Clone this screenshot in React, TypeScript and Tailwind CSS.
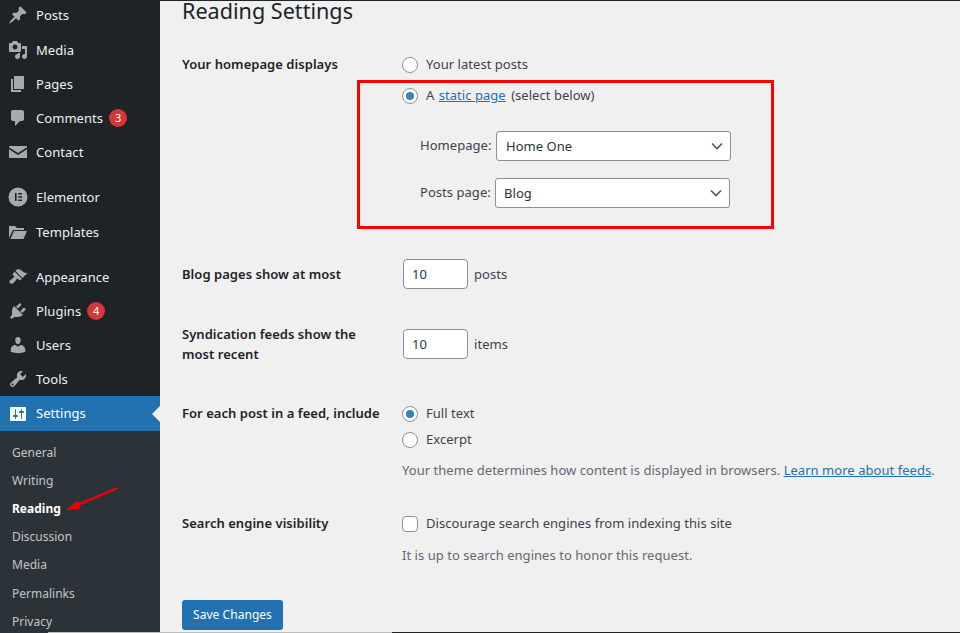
import React from "react";

const F = "font-['Noto_Sans','Open_Sans',sans-serif]";

const Pin = () => (<svg width="20" height="20" viewBox="0 0 20 20" fill="currentColor"><path d="M10.44 3.02l1.82-1.82 6.36 6.35-1.83 1.82c-1.05-.68-2.48-.57-3.41.36l-.75.75c-.92.93-1.04 2.35-.35 3.41l-1.83 1.82-2.41-2.41-2.8 2.79c-.42.42-3.38 2.71-3.8 2.29s1.86-3.39 2.28-3.81l2.79-2.79L4.1 9.36l1.83-1.82c1.05.69 2.48.57 3.4-.36l.75-.75c.93-.92 1.05-2.35.36-3.41z"/></svg>);
const MediaI = () => (<svg width="20" height="20" viewBox="0 0 20 20" fill="currentColor"><path d="M13 11V4c0-.55-.45-1-1-1h-1.67L9 1H5L3.67 3H2c-.55 0-1 .45-1 1v7c0 .55.45 1 1 1h10c.55 0 1-.45 1-1zM7 4.5c1.38 0 2.5 1.12 2.5 2.5S8.38 9.5 7 9.5 4.5 8.38 4.5 7 5.62 4.5 7 4.5zM14 6h5v10.5c0 1.38-1.12 2.5-2.5 2.5S14 17.88 14 16.5s1.12-2.5 2.5-2.5c.17 0 .34.02.5.05V9h-3V6zm-4 8.05V13h2v3.5c0 1.38-1.12 2.5-2.5 2.5S7 17.88 7 16.5 8.12 14 9.5 14c.17 0 .34.02.5.05z"/></svg>);
const PagesI = () => (<svg width="20" height="20" viewBox="0 0 20 20" fill="currentColor"><path d="M6 15V2h10v13H6zm-1 1h8v2H3V5h2v11z"/></svg>);
const CommentI = () => (<svg width="20" height="20" viewBox="0 0 20 20" fill="currentColor"><path d="M5 2h9c1.1 0 2 .9 2 2v7c0 1.1-.9 2-2 2h-2l-5 5v-5H5c-1.1 0-2-.9-2-2V4c0-1.1.9-2 2-2z"/></svg>);
const MailI = () => (<svg width="20" height="20" viewBox="0 0 20 20" fill="currentColor"><path d="M1 4h18v1.2L10 11 1 5.2V4zm0 3.2l9 5.8 9-5.8V16H1V7.2z"/></svg>);
const ElementorI = () => (<svg width="20" height="20" viewBox="0 0 20 20"><path fill="currentColor" fillRule="evenodd" d="M10 .5a9.5 9.5 0 1 0 0 19 9.5 9.5 0 0 0 0-19zM7 6h1.6v8H7V6zm3.2 0H14v1.6h-3.8V6zm0 3.2H14v1.6h-3.8V9.2zm0 3.2H14V14h-3.8v-1.6z"/></svg>);
const FolderI = () => (<svg width="20" height="20" viewBox="0 0 20 20" fill="currentColor"><path d="M1 16V4h6l2 2h7v2H5L1 16zm1.5 1L6 9h13l-3.5 8h-13z" /></svg>);
const BrushI = () => (<svg width="20" height="20" viewBox="0 0 20 20" fill="currentColor"><path d="M14.48 11.06L7.41 3.99l1.5-1.5c.5-.56 2.3-.47 3.51.32 1.21.8 1.43 1.28 2.91 2.1 1.18.64 2.45 1.26 4.45.85zm-.71.71L6.7 4.7 4.93 6.47c-.39.39-.39 1.02 0 1.41l1.06 1.06c.39.39.39 1.03 0 1.42-.6.6-1.43 1.11-2.21 1.69-.35.26-.7.53-1.01.84C1.43 13.23.5 14.52 2 16c1.49 1.49 2.92.57 4.26-.76.3-.31.58-.66.84-1.01.58-.78 1.09-1.61 1.69-2.21.39-.39 1.02-.39 1.41 0l1.06 1.06c.39.39 1.02.39 1.41 0z"/></svg>);
const PlugI = () => (<svg width="20" height="20" viewBox="0 0 20 20" fill="currentColor"><path d="M13.11 4.36L9.87 7.6 8 5.73l3.24-3.24c.35-.34 1.05-.2 1.56.32.52.51.66 1.21.31 1.55zm-8 1.77l.91-1.12 9.01 9.01-1.19.84c-.71.71-2.63 1.16-3.82 1.16H6.14L4.9 17.26c-.59.59-1.54.59-2.12 0-.59-.58-.59-1.53 0-2.12l1.24-1.24v-3.88c0-1.13.4-3.19 1.09-3.89zm7.26 3.97l3.24-3.24c.34-.35 1.04-.21 1.55.31.52.51.66 1.21.31 1.55l-3.24 3.25z"/></svg>);
const UserI = () => (<svg width="20" height="20" viewBox="0 0 20 20" fill="currentColor"><path d="M10 9.25c-2.27 0-2.73-3.44-2.73-3.44C7 4.02 7.82 2 9.97 2c2.16 0 2.98 2.02 2.71 3.81 0 0-.41 3.44-2.68 3.44zm0 2.57L12.72 10c2.39 0 4.52 2.33 4.52 4.53v2.49s-3.65 1.13-7.24 1.13c-3.65 0-7.24-1.13-7.24-1.13v-2.49c0-2.25 1.94-4.48 4.47-4.48z"/></svg>);
const WrenchI = () => (<svg width="20" height="20" viewBox="0 0 20 20" fill="currentColor"><path d="M16.68 9.77c-1.34 1.34-3.3 1.67-4.95.99l-5.41 6.52c-.99.99-2.59.99-3.58 0s-.99-2.59 0-3.57l6.52-5.42c-.68-1.65-.35-3.61.99-4.95 1.28-1.28 3.12-1.62 4.72-1.06l-2.89 2.89 2.82 2.82 2.86-2.87c.53 1.58.18 3.39-1.08 4.65zM3.81 16.21c.4.39 1.04.39 1.43 0 .4-.4.4-1.04 0-1.43-.39-.4-1.03-.4-1.43 0-.39.39-.39 1.03 0 1.43z"/></svg>);
const SlidersI = () => (<svg width="20" height="20" viewBox="0 0 20 20" fill="currentColor"><path fillRule="evenodd" d="M18 16V4c0-.55-.45-1-1-1H3c-.55 0-1 .45-1 1v12c0 .55.45 1 1 1h14c.55 0 1-.45 1-1zM8 11h1c.55 0 1 .45 1 1s-.45 1-1 1H8v1.5c0 .28-.22.5-.5.5s-.5-.22-.5-.5V13H6c-.55 0-1-.45-1-1s.45-1 1-1h1V5.5c0-.28.22-.5.5-.5s.5.22.5.5V11zm5-2h-1c-.55 0-1-.45-1-1s.45-1 1-1h1V5.5c0-.28.22-.5.5-.5s.5.22.5.5V7h1c.55 0 1 .45 1 1s-.45 1-1 1h-1v5.5c0 .28-.22.5-.5.5s-.5-.22-.5-.5V9z"/></svg>);

function MenuItem({ icon, label, badge, className = "h-[34px]" }: { icon: React.ReactNode; label: string; badge?: string; className?: string }) {
  return (
    <div className={`flex items-center shrink-0 ${className} text-[#f0f0f1]`}>
      <span className="w-9 pl-2 flex items-center text-[#a7aaad] shrink-0">{icon}</span>
      <span className="text-[13px] tracking-[0.05px] pt-[2px]">{label}</span>
      {badge && <span className="ml-[6px] w-[18px] h-[18px] rounded-full bg-[#d63638] text-white text-[11px] flex items-center justify-center">{badge}</span>}
    </div>
  );
}

const Radio = ({ on }: { on?: boolean }) => (
  <span className="w-4 h-4 rounded-full border border-[#8c8f94] bg-white flex items-center justify-center shrink-0">
    {on && <span className="w-2 h-2 rounded-full bg-[#3582c4]" />}
  </span>
);

const Chevron = () => (
  <svg width="12" height="8" viewBox="0 0 12 8" fill="none" stroke="#50575e" strokeWidth="1.6"><path d="M1 1.5l5 5 5-5" /></svg>
);

const Select = ({ value, pad }: { value: string; pad: string }) => (
  <div className={`w-[235px] h-[30px] bg-white border border-[#8c8f94] rounded-[3px] flex items-center justify-between ${pad} pr-[7px] text-[#2c3338]`}>
    <span className="pt-[2px]">{value}</span>
    <Chevron />
  </div>
);

const NumberBox = () => (
  <div className="w-[65px] h-[30px] bg-white border border-[#8c8f94] rounded-[4px] flex items-center pl-2 pt-[2px] text-[#2c3338]">10</div>
);

export default function App() {
  return (
    <div className={`relative w-[960px] h-[633px] overflow-hidden flex bg-[#f0f0f1] ${F}`}>
      <aside className="w-[160px] shrink-0 bg-[#1d2327] flex flex-col">
        <MenuItem icon={<Pin />} label="Posts" className="h-[34px] -mt-[2px] mb-px" />
        <MenuItem icon={<MediaI />} label="Media" />
        <MenuItem icon={<PagesI />} label="Pages" />
        <MenuItem icon={<CommentI />} label="Comments" badge="3" />
        <MenuItem icon={<MailI />} label="Contact" />
        <div className="h-[11px] shrink-0" />
        <MenuItem icon={<ElementorI />} label="Elementor" />
        <MenuItem icon={<FolderI />} label="Templates" className="h-[36px]" />
        <div className="h-[10px] shrink-0" />
        <MenuItem icon={<BrushI />} label="Appearance" />
        <MenuItem icon={<PlugI />} label="Plugins" badge="4" />
        <MenuItem icon={<UserI />} label="Users" />
        <MenuItem icon={<WrenchI />} label="Tools" />
        <div className="relative flex items-center h-[35px] shrink-0 bg-[#2271b1] text-white">
          <span className="w-9 pl-2 flex items-center shrink-0"><SlidersI /></span>
          <span className="text-[13px] tracking-[0.05px]">Settings</span>
          <span className="absolute right-0 top-[10px] border-y-[8px] border-y-transparent border-r-[8px] border-r-[#f0f0f1]" />
        </div>
        <div className="flex-1 bg-[#2c3338] pt-[8px] text-[12px] text-[#c3c4c7]">
          {["General", "Writing", "Reading", "Discussion", "Media", "Permalinks", "Privacy"].map((t) => (
            <div key={t} className={`h-[28px] ${t === "Media" ? "mb-px" : ""} flex items-center pl-3 ${t === "Reading" ? "font-bold text-white" : ""}`}>{t}</div>
          ))}
        </div>
      </aside>

      <main className="flex-1 pl-[22px] text-[13px] tracking-[0.04px] text-[#3c434a] border-t border-[#1d2327]">
        <h1 className="h-[21px] text-[21.6px] tracking-normal leading-[19px] text-[#1d2327]">Reading Settings</h1>

        <section className="flex mt-[33px]">
          <div className="w-[220px] -mt-px font-semibold text-[#1d2327] leading-[20px]">Your homepage displays</div>
          <div>
            <label className="flex items-center gap-2 h-5"><Radio /><span>Your latest posts</span></label>
            <label className="flex items-center gap-2 h-5 mt-[11px]"><Radio on /><span>A <a className="ml-px text-[#2271b1] underline">static page</a> <span className="ml-[2px]">(select below)</span></span></label>
            <div className="flex items-center mt-[25px] ml-[18px]"><span className="w-[76px] whitespace-nowrap">Homepage:</span><Select value="Home One" pad="pl-[9px]" /></div>
            <div className="flex items-center mt-[17px] ml-[18px]"><span className="w-[75px] whitespace-nowrap">Posts page:</span><Select value="Blog" pad="pl-2" /></div>
          </div>
        </section>

        <section className="flex mt-[51px] items-center">
          <div className="w-[221px] pt-[2px] font-semibold text-[#1d2327]">Blog pages show at most</div>
          <div className="flex items-center gap-[6px]"><NumberBox /><span className="pt-[2px]">posts</span></div>
        </section>

        <section className="flex mt-[35px] items-center">
          <div className="w-[221px] font-semibold text-[#1d2327] leading-[20px]">Syndication feeds show the<br />most recent</div>
          <div className="flex items-center gap-[6px]"><NumberBox /><span className="pt-[2px]">items</span></div>
        </section>

        <section className="flex mt-[40px]">
          <div className="w-[220px] -mt-px font-semibold text-[#1d2327] leading-[20px]">For each post in a feed, include</div>
          <div>
            <label className="flex items-center gap-2 h-5"><Radio on /><span>Full text</span></label>
            <label className="flex items-center gap-2 h-5 mt-[6px]"><Radio /><span>Excerpt</span></label>
            <p className="mt-[10px] text-[#646970] leading-[20px] whitespace-nowrap">Your theme determines how content is displayed in browsers. <a className="text-[#2271b1] underline">Learn more about feeds</a>.</p>
          </div>
        </section>

        <section className="flex mt-[34px]">
          <div className="w-[220px] -mt-px font-semibold text-[#1d2327] leading-[20px]">Search engine visibility</div>
          <div>
            <label className="flex items-center gap-2 h-5"><span className="w-4 h-4 rounded-[4px] border border-[#8c8f94] bg-white" /><span>Discourage search engines from indexing this site</span></label>
            <p className="mt-[11px] text-[#646970] leading-[20px]">It is up to search engines to honor this request.</p>
          </div>
        </section>

        <button className="mt-[35px] h-[30px] w-[101px] rounded-[3px] bg-[#2271b1] text-white text-[12px]">Save Changes</button>
      </main>

      <div className="absolute left-[357px] top-[80px] w-[417px] h-[149px] border-[3px] border-[#ff0000]" />
      <svg className="absolute left-[62px] top-[484px]" width="60" height="30" viewBox="0 0 60 30"><path d="M55 3l1 2L17.500 21.500 18 25 4 26 16 16.500 17 19z" fill="#f00000" /></svg>
      <div className="absolute left-[48px] w-[344px] bottom-0 h-px bg-[#bdbdbd]" />
      <div className="absolute left-[392px] right-0 bottom-0 h-px bg-[#222222]" />
    </div>
  );
}
